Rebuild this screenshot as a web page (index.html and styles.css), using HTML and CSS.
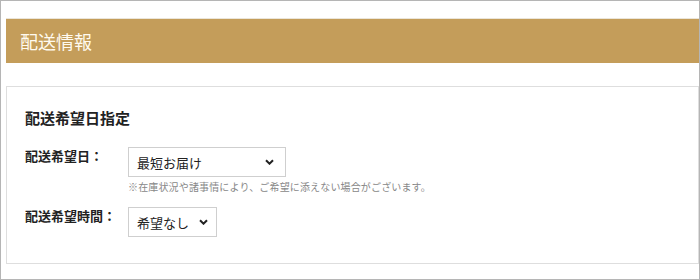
FILE: index.html
```html
<!DOCTYPE html>
<html lang="ja">
<head>
    <meta charset="UTF-8">
    <meta name="viewport" content="width=device-width, initial-scale=1.0">
    <title>配送情報</title>
    <link rel="stylesheet" href="styles.css">
</head>
<body>
    <div class="frame">
        <h2 class="section-title">配送情報</h2>

        <div class="delivery-box">
            <h3 class="box-heading">配送希望日指定</h3>

            <div class="form-row">
                <label class="form-label" for="delivery-date">配送希望日：</label>
                <div class="form-field">
                    <select id="delivery-date" class="select select-date">
                        <option>最短お届け</option>
                    </select>
                    <p class="note">※在庫状況や諸事情により、ご希望に添えない場合がございます。</p>
                </div>
            </div>

            <div class="form-row">
                <label class="form-label" for="delivery-time">配送希望時間：</label>
                <div class="form-field">
                    <select id="delivery-time" class="select select-time">
                        <option>希望なし</option>
                    </select>
                </div>
            </div>
        </div>
    </div>
</body>
</html>
```

FILE: styles.css
```css
* {
    box-sizing: border-box;
}

body {
    margin: 0;
    font-family: "Noto Sans CJK JP", "Noto Sans", sans-serif;
    color: #222;
    background-color: #fff;
}

.frame {
    width: 700px;
    height: 280px;
    border: 1px solid #b5b5b5;
    padding: 17px 0 0 5px;
    overflow: hidden;
}

.section-title {
    margin: 0;
    height: 45px;
    padding-left: 14px;
    border-top: 1px solid #ebe5d9;
    background-color: #c49d5a;
    color: #fffaf0;
    font-size: 18px;
    font-weight: normal;
    line-height: 44px;
}

.delivery-box {
    margin-top: 23px;
    height: 178px;
    border: 1px solid #dedede;
    padding: 19px 0 0 18px;
}

.box-heading {
    margin: 0 0 17px;
    font-size: 15px;
    font-weight: bold;
    line-height: 24px;
}

.form-row {
    display: flex;
    align-items: flex-start;
}

.form-row + .form-row {
    margin-top: 13px;
}

.form-label {
    width: 103px;
    padding-top: 1px;
    font-size: 13px;
    font-weight: bold;
    line-height: 16px;
}

.form-field {
    display: flex;
    flex-direction: column;
    align-items: flex-start;
}

.select {
    appearance: none;
    -webkit-appearance: none;
    height: 30px;
    padding: 0 24px 0 8px;
    border: 1px solid #cfcfcf;
    border-radius: 0;
    background-color: #fff;
    background-image: url("data:image/svg+xml,%3Csvg xmlns='http://www.w3.org/2000/svg' width='9' height='6' viewBox='0 0 9 6'%3E%3Cpath d='M1 1.2l3.5 3.5 3.5-3.5' fill='none' stroke='%23222' stroke-width='2'/%3E%3C/svg%3E");
    background-repeat: no-repeat;
    background-position: right 10px center;
    font-family: inherit;
    font-size: 13px;
    color: #222;
}

.select-date {
    width: 158px;
    background-position: right 11px center;
}

.select-time {
    width: 89px;
    background-position: right 8px center;
}

.note {
    margin: 3px 0 0;
    font-size: 10px;
    line-height: 14px;
    letter-spacing: 0.15px;
    color: #888;
}
```
